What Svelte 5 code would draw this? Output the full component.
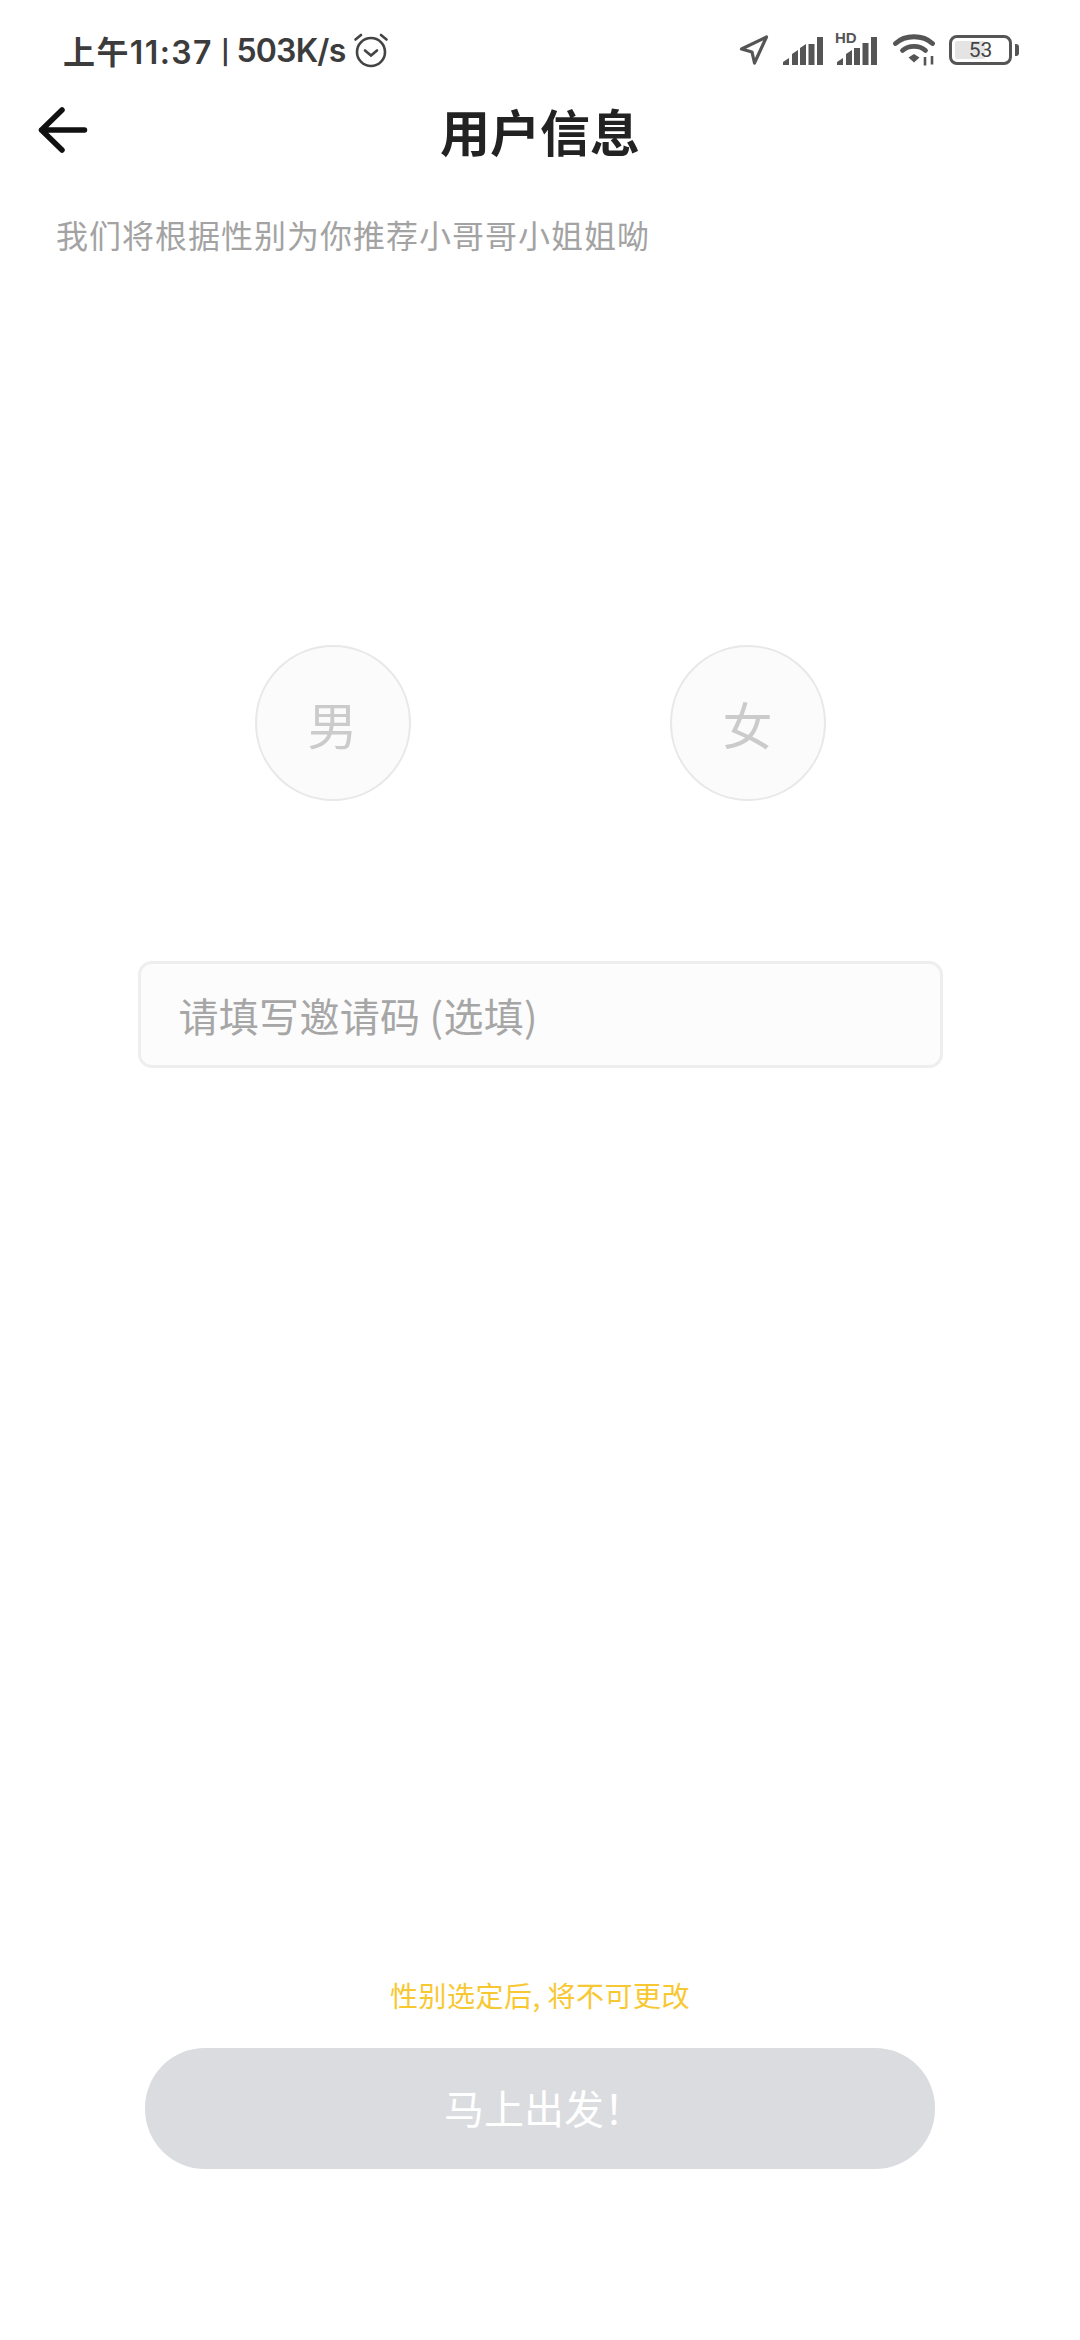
<script>
	let code = $state('');
</script>

<div class="page">
	<div class="status">
		<div class="status-left">
			<span class="time">上午11:37</span>
			<span class="sep">|</span>
			<span class="speed">503K/s</span>
			<svg class="alarm" width="36" height="36" viewBox="0 0 36 36" fill="none" stroke="#444" stroke-width="2.6" stroke-linecap="round">
				<circle cx="18" cy="20" r="14" />
				<path d="M12 18.5l6 5 6-5" />
				<path d="M2.5 7.5L8 3M33.5 7.5L28 3" />
			</svg>
		</div>
		<div class="status-right">
			<svg class="arrow" width="30" height="30" viewBox="0 0 29 30" fill="none" stroke="#555" stroke-width="3.2" stroke-linejoin="round">
				<path d="M2 14L27 2 15 28 12.5 17z" />
			</svg>
			<svg class="signal" width="40" height="28" viewBox="0 0 40 28" fill="#555">
				<path d="M0 28v-3l6-4v7zM9 28V17l6-4v15zM17 28V11l6-4v21zM25.500 28V7h6v21zM34 28V0h6v28z" />
			</svg>
			<div class="hd">
				<span>HD</span>
				<svg width="40" height="28" viewBox="0 0 40 28" fill="#555">
					<path d="M0 28v-3l6-4v7zM9 28V17l6-4v15zM17 28V11h6v17zM25.500 28V6h6v22zM34 28V0h6v28z" />
				</svg>
			</div>
			<svg class="wifi" width="44" height="32" viewBox="0 0 44 32" fill="none" stroke="#555" stroke-width="4.800" stroke-linecap="round">
				<path d="M2.500 9.500C12 0.500 30 0.500 39.500 9.500" />
				<path d="M9.500 16.500C15.500 11 26.500 11 32.500 16.500" />
				<path d="M15.500 23.500l5.500-3.500 5.500 3.500-5.500 5z" fill="#555" stroke="none" />
				<path d="M32 23v8.500M39 22v8.500" stroke-width="2.600" stroke-linecap="butt" />
			</svg>
			<div class="battery">
				<div class="battery-body">
					<div class="battery-fill"></div>
					<span>53</span>
				</div>
				<div class="battery-tip"></div>
			</div>
		</div>
	</div>

	<div class="header">
		<svg class="back" width="50" height="46" viewBox="0 0 50 46" fill="none" stroke="#111" stroke-width="5.500" stroke-linecap="round" stroke-linejoin="round">
			<path d="M24 3L3.500 23 24 43M3.500 23h43" />
		</svg>
		<h1>用户信息</h1>
	</div>

	<p class="sub">我们将根据性别为你推荐小哥哥小姐姐呦</p>

	<div class="gender">
		<button class="circle">男</button>
		<button class="circle">女</button>
	</div>

	<input class="invite" type="text" placeholder="请填写邀请码 (选填)" bind:value={code} />

	<div class="bottom">
		<p class="hint">性别选定后, 将不可更改</p>
		<button class="go">马上出发！</button>
	</div>
</div>

<style>
	:global(body) {
		background: #fff;
	}

	.page {
		height: 2340px;
		display: flex;
		flex-direction: column;
		align-items: center;
		font-family: "Noto Sans CJK SC", "Noto Sans", sans-serif;
		overflow: hidden;
	}

	.status {
		align-self: stretch;
		height: 100px;
		box-sizing: border-box;
		padding: 0 61px 0 63px;
		display: flex;
		justify-content: space-between;
		align-items: center;
	}

	.status-left {
		display: flex;
		align-items: center;
		font-family: Inter, "Noto Sans CJK SC", sans-serif;
		font-size: 32px;
		font-weight: 600;
		color: #3c3c3c;
	}

	.time {
		letter-spacing: 1.4px;
	}

	.sep {
		margin: 0 7px 0 8px;
		font-family: Roboto, sans-serif;
		font-size: 34px;
		font-weight: 700;
	}

	.speed {
		letter-spacing: -0.8px;
	}

	.alarm {
		margin-left: 8px;
	}

	.status-right {
		display: flex;
		align-items: center;
		gap: 14px;
	}

	.signal {
		margin-top: 2px;
	}

	.hd {
		position: relative;
		display: flex;
		margin-top: 2px;
	}

	.hd span {
		position: absolute;
		left: -2px;
		top: -8px;
		font-family: "Liberation Sans", sans-serif;
		font-size: 15px;
		font-weight: 700;
		color: #555;
	}

	.wifi {
		margin-left: 2px;
	}

	.battery {
		display: flex;
		align-items: center;
		gap: 3px;
		margin-left: -2px;
	}

	.battery-body {
		position: relative;
		box-sizing: border-box;
		width: 63px;
		height: 30px;
		border: 3.500px solid #555;
		border-radius: 8px;
		display: flex;
		align-items: center;
		justify-content: center;
		padding: 2px;
	}

	.battery-fill {
		position: absolute;
		left: 3px;
		top: 3px;
		bottom: 3px;
		width: 53%;
		background: #e4e4e4;
		border-radius: 2px;
	}

	.battery-body span {
		position: relative;
		font-family: Roboto, sans-serif;
		font-size: 21px;
		color: #444;
	}

	.battery-tip {
		width: 4px;
		height: 12px;
		background: #555;
		border-radius: 0 3px 3px 0;
	}

	.header {
		position: relative;
		align-self: stretch;
		height: 60px;
		padding-bottom: 2px;
		margin-bottom: -2px;
		display: flex;
		justify-content: center;
		align-items: center;
	}

	.back {
		position: absolute;
		left: 38px;
		top: 7px;
	}

	h1 {
		margin: 0;
		font-size: 50px;
		font-weight: 700;
		color: #222;
		line-height: 60px;
	}

	.sub {
		align-self: stretch;
		margin: 50px 0 0 56px;
		font-size: 32px;
		letter-spacing: 1px;
		line-height: 48px;
		color: #a3a3a3;
	}

	.gender {
		margin-top: 387px;
		display: flex;
		gap: 259px;
	}

	.circle {
		box-sizing: border-box;
		width: 156px;
		height: 156px;
		padding: 0;
		border: 2px solid #e8e8e8;
		border-radius: 50%;
		background: #fbfbfb;
		font-family: inherit;
		font-size: 50px;
		color: #cbcbcb;
	}

	.invite {
		margin-top: 160px;
		box-sizing: border-box;
		width: 805px;
		height: 107px;
		padding: 0 38px;
		border: 3px solid #eeeeee;
		border-radius: 14px;
		background: #fcfcfc;
		font-family: inherit;
		font-size: 40px;
		letter-spacing: 0.3px;
		outline: none;
	}

	.invite::placeholder {
		color: #a6a6a6;
		opacity: 1;
	}

	.bottom {
		margin-top: auto;
		margin-bottom: 171px;
		display: flex;
		flex-direction: column;
		align-items: center;
		gap: 33px;
	}

	.hint {
		margin: 0;
		font-size: 28px;
		letter-spacing: 0.5px;
		line-height: 40px;
		color: #f8c832;
	}

	.go {
		width: 790px;
		height: 121px;
		padding: 0 0 4px 8px;
		border: none;
		border-radius: 60px;
		background: #dbdce0;
		color: #fff;
		font-family: inherit;
		font-size: 40px;
	}
</style>
